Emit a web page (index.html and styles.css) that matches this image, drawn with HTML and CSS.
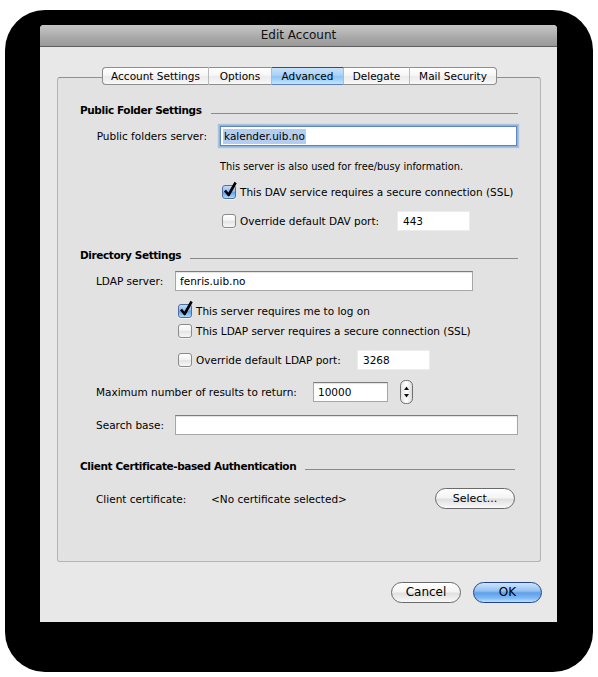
FILE: index.html
```html
<!DOCTYPE html>
<html>
<head>
<meta charset="utf-8">
<title>Edit Account</title>
<link rel="stylesheet" href="styles.css">
</head>
<body>
<div class="backdrop">
  <div class="window">
    <div class="titlebar">Edit Account</div>
    <div class="content">
      <div class="tabs">
        <div class="tab first w1">Account Settings</div>
        <div class="tab w2">Options</div>
        <div class="tab selected w3">Advanced</div>
        <div class="tab w4">Delegate</div>
        <div class="tab last w5">Mail Security</div>
      </div>
      <div class="panel">
        <div class="section-head"><span>Public Folder Settings</span><i class="rule"></i></div>
        <div class="row r-pf">
          <span class="lbl right w-pf">Public folders server:</span>
          <div class="field focus grow"><span class="sel">kalender.uib.no</span></div>
        </div>
        <div class="note">This server is also used for free/busy information.</div>
        <div class="check r-cb1 in1">
          <span class="box checked"><svg class="tick" width="16" height="18" viewBox="0 0 16 18"><path d="M3 9.5 L6.6 14 L13.6 1.5" fill="none" stroke="#000" stroke-width="2.6" stroke-linejoin="round"/></svg></span>
          <span>This DAV service requires a secure connection (SSL)</span>
        </div>
        <div class="check r-cb2 in1">
          <span class="box"></span>
          <span class="ctext w-dav">Override default DAV port:</span>
          <div class="field plain port">443</div>
        </div>

        <div class="section-head s2"><span>Directory Settings</span><i class="rule"></i></div>
        <div class="row r-ldap">
          <span class="lbl w-ldap">LDAP server:</span>
          <div class="field ldapf">fenris.uib.no</div>
        </div>
        <div class="check r-cb3 in2">
          <span class="box checked"><svg class="tick" width="16" height="18" viewBox="0 0 16 18"><path d="M3 9.5 L6.6 14 L13.6 1.5" fill="none" stroke="#000" stroke-width="2.6" stroke-linejoin="round"/></svg></span>
          <span>This server requires me to log on</span>
        </div>
        <div class="check r-cb4 in2">
          <span class="box"></span>
          <span>This LDAP server requires a secure connection (SSL)</span>
        </div>
        <div class="check r-cb5 in2">
          <span class="box"></span>
          <span class="ctext w-lport">Override default LDAP port:</span>
          <div class="field plain port">3268</div>
        </div>
        <div class="row r-max">
          <span class="lbl w-max">Maximum number of results to return:</span>
          <div class="field maxf">10000</div>
          <svg class="stepper" width="13" height="24" viewBox="0 0 13 24">
            <defs>
              <linearGradient id="sg" x1="0" y1="0" x2="1" y2="0">
                <stop offset="0" stop-color="#e2e2e2"/>
                <stop offset="0.5" stop-color="#ffffff"/>
                <stop offset="1" stop-color="#d8d8d8"/>
              </linearGradient>
            </defs>
            <rect x="0.5" y="0.5" width="12" height="23" rx="5" fill="url(#sg)" stroke="#6f6f6f"/>
            <path d="M6.5 6.5 L9 10 H4 Z" fill="#111"/>
            <path d="M6.5 17.5 L9 14 H4 Z" fill="#111"/>
          </svg>
        </div>
        <div class="row r-search">
          <span class="lbl w-ldap">Search base:</span>
          <div class="field grow"></div>
        </div>

        <div class="section-head s3"><span>Client Certificate-based Authentication</span><i class="rule"></i></div>
        <div class="row r-client">
          <span class="lbl w-client">Client certificate:</span>
          <span>&lt;No certificate selected&gt;</span>
          <div class="btn small">Select...</div>
        </div>
      </div>
      <div class="actions">
        <div class="btn cancel">Cancel</div>
        <div class="btn ok">OK</div>
      </div>
    </div>
  </div>
</div>
</body>
</html>
```

FILE: styles.css
```css
* { box-sizing: border-box; }
html, body { margin: 0; padding: 0; background: #ffffff; }
body {
  font-family: "DejaVu Sans", "Liberation Sans", sans-serif;
  font-size: 10.5px;
  color: #000;
}

.backdrop {
  margin: 10px 0 0 5px;
  width: 588px;
  height: 662px;
  background: #000;
  border-radius: 40px;
  padding: 15px 0 0 35px;
}

.window {
  width: 517px;
  height: 597px;
  background: #e8e8e8;
  border-radius: 4px 4px 0 0;
  display: flex;
  flex-direction: column;
}

.titlebar {
  height: 22px;
  line-height: 21px;
  text-align: center;
  font-size: 12px;
  color: #111;
  background: linear-gradient(#c4c4c4 0%, #b8b8b8 30%, #a8a8a8 60%, #989898 100%);
  border-bottom: 1px solid #5e5e5e;
  border-radius: 4px 4px 0 0;
}

.content {
  flex: 1;
  padding: 20px 16px 0 17px;
  display: flex;
  flex-direction: column;
}

/* tabs */
.tabs {
  display: flex;
  justify-content: center;
  height: 18px;
  position: relative;
  z-index: 1;
  margin-left: 1px;
}
.tab {
  height: 18px;
  line-height: 16px;
  text-align: center;
  border-top: 1px solid #8e8e8e;
  border-bottom: 1px solid #8e8e8e;
  border-right: 1px solid #b9b9b9;
  background: linear-gradient(#ffffff 0%, #f6f6f6 45%, #ebebeb 55%, #f8f8f8 100%);
}
.tab.first { border-left: 1px solid #8e8e8e; border-radius: 4px 0 0 4px; }
.tab.last { border-right: 1px solid #8e8e8e; border-radius: 0 4px 4px 0; }
.tab.selected {
  border-top-color: #2f4b98;
  border-bottom-color: #5e7fb8;
  background: linear-gradient(#c8e2fb 0%, #a9d2f7 45%, #8ec4f3 55%, #c4e6ff 100%);
}
.w1 { width: 107px; }
.w2 { width: 63px; }
.w3 { width: 72px; }
.w4 { width: 66px; }
.w5 { width: 87px; }

/* panel */
.panel {
  margin-top: -8px;
  border: 1px solid #b4b4b4;
  border-top-color: #8f8f8f;
  border-radius: 3px;
  background: #e2e2e2;
  padding: 25px 22px 52px 22px;
  display: flex;
  flex-direction: column;
}

.section-head {
  display: flex;
  height: 14px;
  line-height: 14px;
  font-weight: bold;
  letter-spacing: -0.4px;
  white-space: nowrap;
}
.section-head .rule {
  flex: 1;
  height: 1px;
  background: #8a8a8a;
  margin: 10px 0 0 9px;
}
.s2 { margin-top: 17px; }
.s3 { margin-top: 24px; margin-right: 3px; }

.row { display: flex; align-items: center; white-space: nowrap; }
.lbl { padding-left: 16px; flex: none; }
.lbl.right { text-align: right; padding-right: 12px; }
.w-pf { width: 139px; }
.w-ldap { width: 95px; }
.w-max { width: 233px; }
.w-client { width: 131px; }

.r-pf { margin-top: 8px; height: 22px; }
.r-ldap { margin-top: 9px; height: 20px; }
.r-max { margin-top: 10px; height: 24px; }
.r-search { margin-top: 11px; height: 20px; }
.r-client { margin-top: 15px; height: 21px; padding-right: 3px; }

.field {
  height: 20px;
  line-height: 18px;
  padding-left: 4px;
  background: #fff;
  border: 1px solid #a6a6a6;
  border-top-color: #7c7c7c;
  box-shadow: inset 0 1px 1px rgba(0, 0, 0, 0.12);
  flex: none;
}
.field.grow { flex: 1; }
.field.focus {
  height: 20px;
  margin: 0 1px;
  border: 1px solid #5a88c4;
  box-shadow: 0 0 0 1px #8fb4e0, 0 0 1px 2px rgba(128, 168, 220, 0.55);
  padding-left: 2px;
}
.sel {
  background: #b3cdf0;
  display: inline-block;
  line-height: 15px;
  padding: 0 1px;
}
.field.plain {
  border: 1px solid #ececec;
  box-shadow: none;
  padding-left: 5px;
}
.port { width: 73px; }
.ldapf { width: 298px; }
.maxf { width: 75px; }
.stepper { margin-left: 12px; flex: none; }

.note {
  margin-top: 13px;
  height: 14px;
  line-height: 14px;
  padding-left: 140px;
  font-size: 9.8px;
}

.check {
  display: flex;
  align-items: center;
  height: 16px;
  white-space: nowrap;
}
.in1 { padding-left: 142px; }
.in2 { padding-left: 98px; }
.r-cb1 { margin-top: 10px; }
.r-cb2 { margin-top: 11px; height: 20px; }
.r-cb3 { margin-top: 12px; }
.r-cb4 { margin-top: 4px; }
.r-cb5 { margin-top: 11px; height: 20px; }
.ctext { flex: none; }
.w-dav { width: 157px; }
.w-lport { width: 161px; }

.box {
  position: relative;
  width: 14px;
  height: 14px;
  flex: none;
  margin-right: 4px;
  border: 1px solid #8a8a8a;
  border-radius: 3px;
  background: linear-gradient(#ffffff 0%, #f3f3f3 45%, #e4e4e4 55%, #f8f8f8 100%);
  box-shadow: 0 1px 0 rgba(255, 255, 255, 0.6);
}
.box.checked {
  border-color: #4d6e9f;
  background: linear-gradient(#c3ddf7 0%, #8cbcee 45%, #64a3e8 55%, #b2dafd 100%);
}
.tick {
  position: absolute;
  left: -1px;
  top: -5px;
}

/* buttons */
.btn {
  height: 21px;
  line-height: 19px;
  text-align: center;
  border: 1px solid #6a6a6a;
  border-radius: 11px;
  background: linear-gradient(#ffffff 0%, #f4f4f4 45%, #e0e0e0 55%, #f9f9f9 100%);
  font-size: 12px;
  flex: none;
}
.btn.small {
  margin-left: auto;
  width: 80px;
  font-size: 11px;
}
.actions {
  display: flex;
  justify-content: flex-end;
  gap: 12px;
  margin-top: 20px;
  margin-right: -1px;
}
.cancel { width: 70px; }
.ok {
  width: 69px;
  border-color: #23428f;
  background: linear-gradient(#cde4fb 0%, #93c1f2 42%, #5f9fe7 52%, #7cb8f4 78%, #b9e2ff 100%);
}
```
